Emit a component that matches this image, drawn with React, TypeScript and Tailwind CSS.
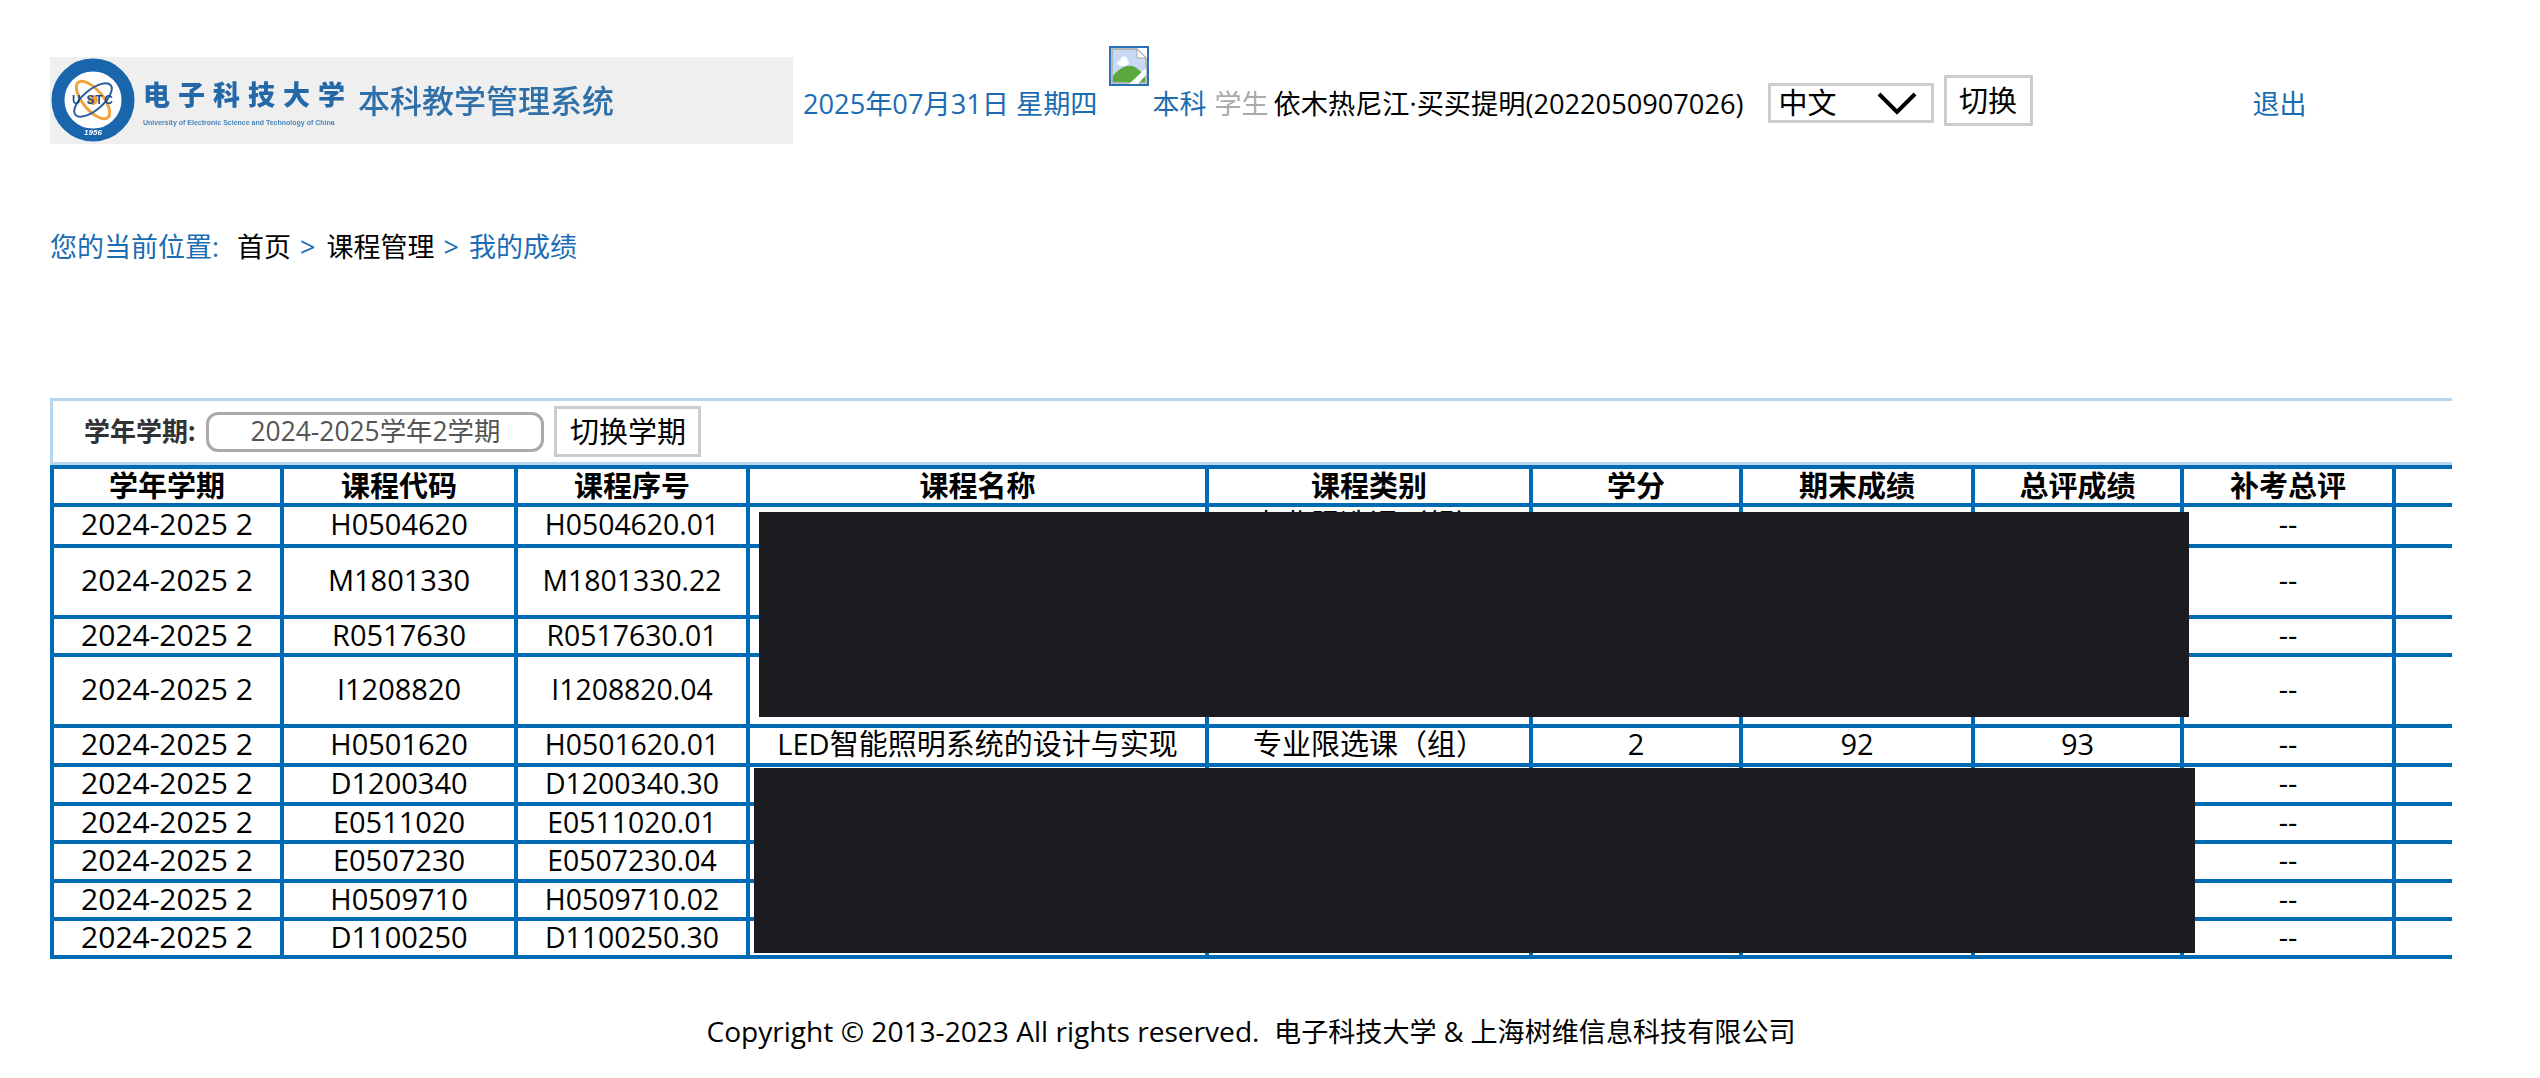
import React from "react";

type Row = { term: string; code: string; seq: string; name?: string; cat?: string; credit?: string; exam?: string; total?: string; h: string };

const rows: Row[] = [
  { term: "2024-2025 2", code: "H0504620", seq: "H0504620.01", cat: "专业限选课（组）", credit: "2", h: "h-[41px]" },
  { term: "2024-2025 2", code: "M1801330", seq: "M1801330.22", h: "h-[71px]" },
  { term: "2024-2025 2", code: "R0517630", seq: "R0517630.01", h: "h-[38px]" },
  { term: "2024-2025 2", code: "I1208820", seq: "I1208820.04", h: "h-[71px]" },
  { term: "2024-2025 2", code: "H0501620", seq: "H0501620.01", name: "LED智能照明系统的设计与实现", cat: "专业限选课（组）", credit: "2", exam: "92", total: "93", h: "h-[39px]" },
  { term: "2024-2025 2", code: "D1200340", seq: "D1200340.30", h: "h-[39px]" },
  { term: "2024-2025 2", code: "E0511020", seq: "E0511020.01", h: "h-[38px]" },
  { term: "2024-2025 2", code: "E0507230", seq: "E0507230.04", h: "h-[39px]" },
  { term: "2024-2025 2", code: "H0509710", seq: "H0509710.02", h: "h-[38px]" },
  { term: "2024-2025 2", code: "D1100250", seq: "D1100250.30", h: "h-[38px]" },
];

const heads = ["学年学期", "课程代码", "课程序号", "课程名称", "课程类别", "学分", "期末成绩", "总评成绩", "补考总评", ""];
const th = "border-[4px] border-[#006bb5] p-0 text-center align-middle leading-[32px] font-bold";
const td = "border-[4px] border-[#006bb5] p-0 pb-[3px] text-center align-middle leading-[30px]";

function Logo() {
  return (
    <svg width="743" height="87" viewBox="0 0 743 87" className="block shrink-0 bg-[#efefef]">
      <g className="blur-[0.6px]">
        <circle cx="43" cy="43" r="35" fill="#fff" stroke="#1a66ad" strokeWidth="13" />
        <circle cx="43" cy="43" r="40" fill="none" stroke="#1a66ad" strokeWidth="2" />
        <ellipse cx="43" cy="43" rx="23" ry="10" fill="none" stroke="#f0a33c" strokeWidth="3" transform="rotate(50 43 43)" />
        <ellipse cx="43" cy="43" rx="23" ry="10" fill="none" stroke="#2d5f9e" strokeWidth="2" transform="rotate(-40 43 43)" />
        <circle cx="43" cy="43" r="5" fill="#f0a33c" />
        <text x="43" y="47" textAnchor="middle" fontSize="12" fontWeight="700" fill="#1a4f8f" fontFamily="Liberation Sans, sans-serif" letterSpacing="1.2">U STC</text>
        <text x="43" y="78" textAnchor="middle" fontSize="8" fontWeight="700" fontStyle="italic" fill="#fff" fontFamily="Liberation Sans, sans-serif">1956</text>
        <text x="93" y="48" fontSize="27" fontWeight="900" fill="#2468a8" letterSpacing="8" fontFamily="Noto Sans CJK SC, sans-serif">电子科技大学</text>
        <text x="93" y="68" fontSize="7" fontWeight="700" fill="#4c86bb" fontFamily="Liberation Sans, sans-serif">University of Electronic Science and Technology of China</text>
        <text x="308" y="56" fontSize="32" fontWeight="500" fill="#2f70a8" fontFamily="Noto Sans CJK SC, sans-serif">本科教学管理系统</text>
      </g>
    </svg>
  );
}

function BrokenImage() {
  return (
    <svg width="40" height="40" viewBox="0 0 40 40" className="block shrink-0">
      <rect x="1" y="1" width="38" height="38" fill="#fff" stroke="#2a72b5" strokeWidth="2" />
      <path d="M3 3H28L37 12V37H3Z" fill="#c8d9f4" stroke="#a8a8a8" strokeWidth="1.5" />
      <path d="M28 3V12H37Z" fill="#fff" stroke="#a8a8a8" strokeWidth="1" />
      <ellipse cx="14" cy="17" rx="6" ry="3" fill="#fff" />
      <circle cx="15" cy="14" r="3.5" fill="#fff" />
      <path d="M4 36V30C9 23 17 19 23 20C28 21 33 26 36 32V36Z" fill="#5aa83c" />
      <path d="M20 38L37 22V29L29 38Z" fill="#fff" />
    </svg>
  );
}

export default function App() {
  return (
    <div className="w-[2540px] h-[1078px] overflow-hidden bg-white text-[29px] text-black [font-family:'Open_Sans','Noto_Sans_CJK_SC',sans-serif]">
      <header className="flex items-start pl-[50px] pt-[46px] h-[156px]">
        <div className="mt-[11px]"><Logo /></div>
        <span className="ml-[10px] mt-[38px] text-[#1b6cb3] text-[27.2px] leading-[40px] whitespace-nowrap">2025年07月31日 星期四</span>
        <div className="ml-[11px]"><BrokenImage /></div>
        <span className="ml-[4px] mt-[38px] text-[#1b6cb3] text-[27px] leading-[40px] whitespace-nowrap">本科</span>
        <span className="ml-[8px] mt-[38px] text-[#aaaaaa] text-[27px] leading-[40px] whitespace-nowrap">学生</span>
        <span className="ml-[5px] mt-[38px] text-[27.2px] leading-[40px] whitespace-nowrap">依木热尼江·买买提明(2022050907026)</span>
        <div className="ml-[24px] mt-[37px] w-[166px] h-[40px] border-[3px] border-[#cccccc] flex items-center justify-between pl-[8px] pr-[14px] text-[29px]">
          <span>中文</span>
          <svg width="40" height="24" viewBox="0 0 40 24"><path d="M2 3L20 21L38 3" fill="none" stroke="#000" strokeWidth="4" /></svg>
        </div>
        <button className="ml-[10px] mt-[29px] w-[89px] h-[51px] border-[3px] border-[#cccccc] bg-white text-[29px]">切换</button>
        <span className="ml-[220px] mt-[38px] text-[#1b6cb3] text-[27px] leading-[40px]">退出</span>
      </header>

      <nav className="pl-[50px] mt-[71px] h-[40px] flex items-center text-[27px] leading-[40px] text-[#1b6cb3] whitespace-nowrap">
        <span className="w-[172px]">您的当前位置:</span>
        <span className="ml-[15px] text-black">首页</span>
        <span className="ml-[9px]">&gt;</span>
        <span className="ml-[11px] text-black">课程管理</span>
        <span className="ml-[9px]">&gt;</span>
        <span className="ml-[10px]">我的成绩</span>
      </nav>

      <section className="ml-[50px] w-[2402px] mt-[131px]">
        <div className="h-[67px] border-t-[3px] border-b-[3px] border-l-[3px] border-[#b5d6ee] flex items-center pl-[31px]">
          <span className="font-bold text-[#333333] text-[26px]">学年学期:</span>
          <div className="ml-[11px] w-[338px] h-[40px] rounded-[12px] border-[3px] border-[#aaaaaa] flex items-center justify-center text-[#555555] text-[26.4px]">2024-2025学年2学期</div>
          <button className="ml-[10px] w-[147px] h-[51px] border-[3px] border-[#cccccc] bg-white text-[29px]">切换学期</button>
        </div>
        <div className="relative w-[2402px] h-[494px] overflow-hidden">
          <table className="table-fixed border-collapse w-[2548px]">
            <colgroup>
              <col className="w-[230px]" />
              <col className="w-[234px]" />
              <col className="w-[232px]" />
              <col className="w-[459px]" />
              <col className="w-[324px]" />
              <col className="w-[210px]" />
              <col className="w-[232px]" />
              <col className="w-[209px]" />
              <col className="w-[212px]" />
              <col className="w-[206px]" />
            </colgroup>
            <thead>
              <tr className="h-[38px]">
                {heads.map((h, i) => (
                  <th key={i} className={th}>{h}</th>
                ))}
              </tr>
            </thead>
            <tbody>
              {rows.map((r) => (
                <tr key={r.seq} className={r.h}>
                  <td className={td + " text-[30px]"}>{r.term}</td>
                  <td className={td}>{r.code}</td>
                  <td className={td + " text-[28.4px]"}>{r.seq}</td>
                  <td className={td}>{r.name}</td>
                  <td className={td}>{r.cat}</td>
                  <td className={td}>{r.credit}</td>
                  <td className={td}>{r.exam}</td>
                  <td className={td}>{r.total}</td>
                  <td className={td}>--</td>
                  <td className={td}></td>
                </tr>
              ))}
            </tbody>
          </table>
          <div className="absolute left-[709px] top-[47px] w-[1430px] h-[205px] bg-[#1c1b20]" />
          <div className="absolute left-[704px] top-[303px] w-[1441px] h-[185px] bg-[#1c1b20]" />
        </div>
      </section>

      <footer className="mt-[52px] pr-[38px] text-center leading-[40px] whitespace-pre">
        <span className="text-[28.1px]">Copyright © 2013-2023 All rights reserved.  </span>
        <span className="text-[27.1px]">电子科技大学 &amp; 上海树维信息科技有限公司</span>
      </footer>
    </div>
  );
}
